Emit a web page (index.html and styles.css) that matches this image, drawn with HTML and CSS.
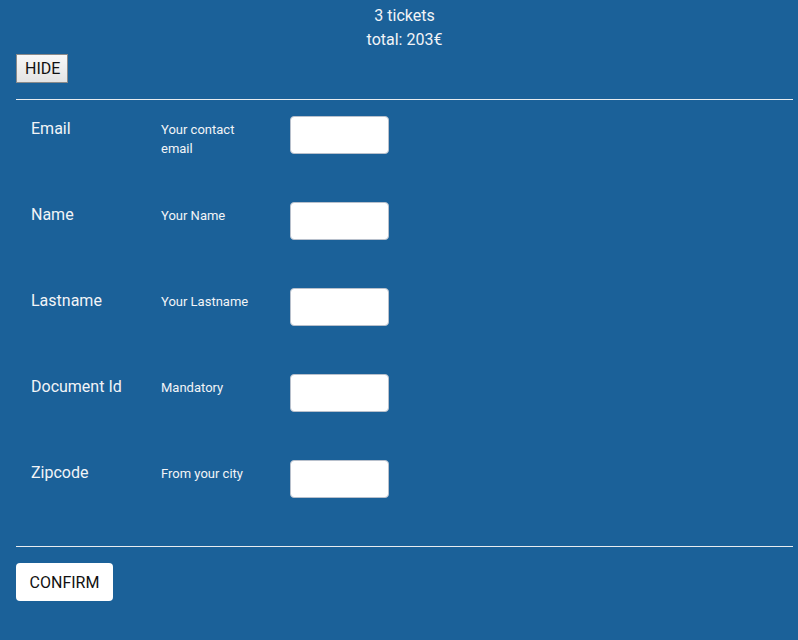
FILE: index.html
```
<!DOCTYPE html>
<html>
<head>
<meta charset="utf-8">
<link rel="stylesheet" href="styles.css">
</head>
<body>
<div class="page">
  <div class="summary">
    <div>3 tickets</div>
    <div>total: 203€</div>
  </div>
  <button class="hide">HIDE</button>
  <div class="rule"></div>
  <form class="form">
    <div class="row">
      <div class="label">Email</div>
      <div class="desc">Your contact email</div>
      <input class="field" type="text">
    </div>
    <div class="row">
      <div class="label">Name</div>
      <div class="desc">Your Name</div>
      <input class="field" type="text">
    </div>
    <div class="row">
      <div class="label">Lastname</div>
      <div class="desc">Your Lastname</div>
      <input class="field" type="text">
    </div>
    <div class="row">
      <div class="label">Document Id</div>
      <div class="desc">Mandatory</div>
      <input class="field" type="text">
    </div>
    <div class="row">
      <div class="label">Zipcode</div>
      <div class="desc">From your city</div>
      <input class="field" type="text">
    </div>
  </form>
  <div class="rule"></div>
  <button class="confirm">CONFIRM</button>
</div>
</body>
</html>
```
FILE: styles.css
```
html, body {
  margin: 0;
  padding: 0;
  background: #1b6199;
  height: 100%;
}
body {
  font-family: Roboto, "Liberation Sans", sans-serif;
  color: #f2f4f7;
}
.page {
  width: 777px;
  padding: 4px 0 0 16px;
}
.summary {
  text-align: center;
  font-size: 16px;
  line-height: 24px;
}
.hide {
  display: block;
  margin-top: 2px;
  font-family: Roboto, "Liberation Sans", sans-serif;
  font-size: 16px;
  line-height: 19px;
  padding: 4px 7px 4px 8px;
  border: 1px solid #8a8a8a;
  border-radius: 0;
  background: linear-gradient(#f8f8f8, #e4e4e4);
  color: #111;
}
.rule {
  height: 1px;
  background: #e8ecf0;
  margin-top: 16px;
}
.form {
  margin: 0;
  padding: 16px 0 0 15px;
}
.row {
  display: grid;
  grid-template-columns: 130px 129px 99px;
  align-items: start;
  height: 38px;
  margin-bottom: 48px;
}
.label {
  font-size: 16px;
  line-height: 24px;
  padding-top: 1px;
}
.desc {
  font-size: 13px;
  line-height: 19px;
  padding-top: 4px;
  width: 100px;
}
.field {
  box-sizing: border-box;
  width: 99px;
  height: 38px;
  margin: 0;
  border: 1px solid #b8c0cc;
  border-radius: 4px;
  background: #fff;
}
.confirm {
  display: block;
  margin-top: 16px;
  box-sizing: border-box;
  width: 97px;
  height: 38px;
  padding: 0;
  font-family: Roboto, "Liberation Sans", sans-serif;
  font-size: 16px;
  color: #111;
  background: #fff;
  border: none;
  border-radius: 4px;
}
```
